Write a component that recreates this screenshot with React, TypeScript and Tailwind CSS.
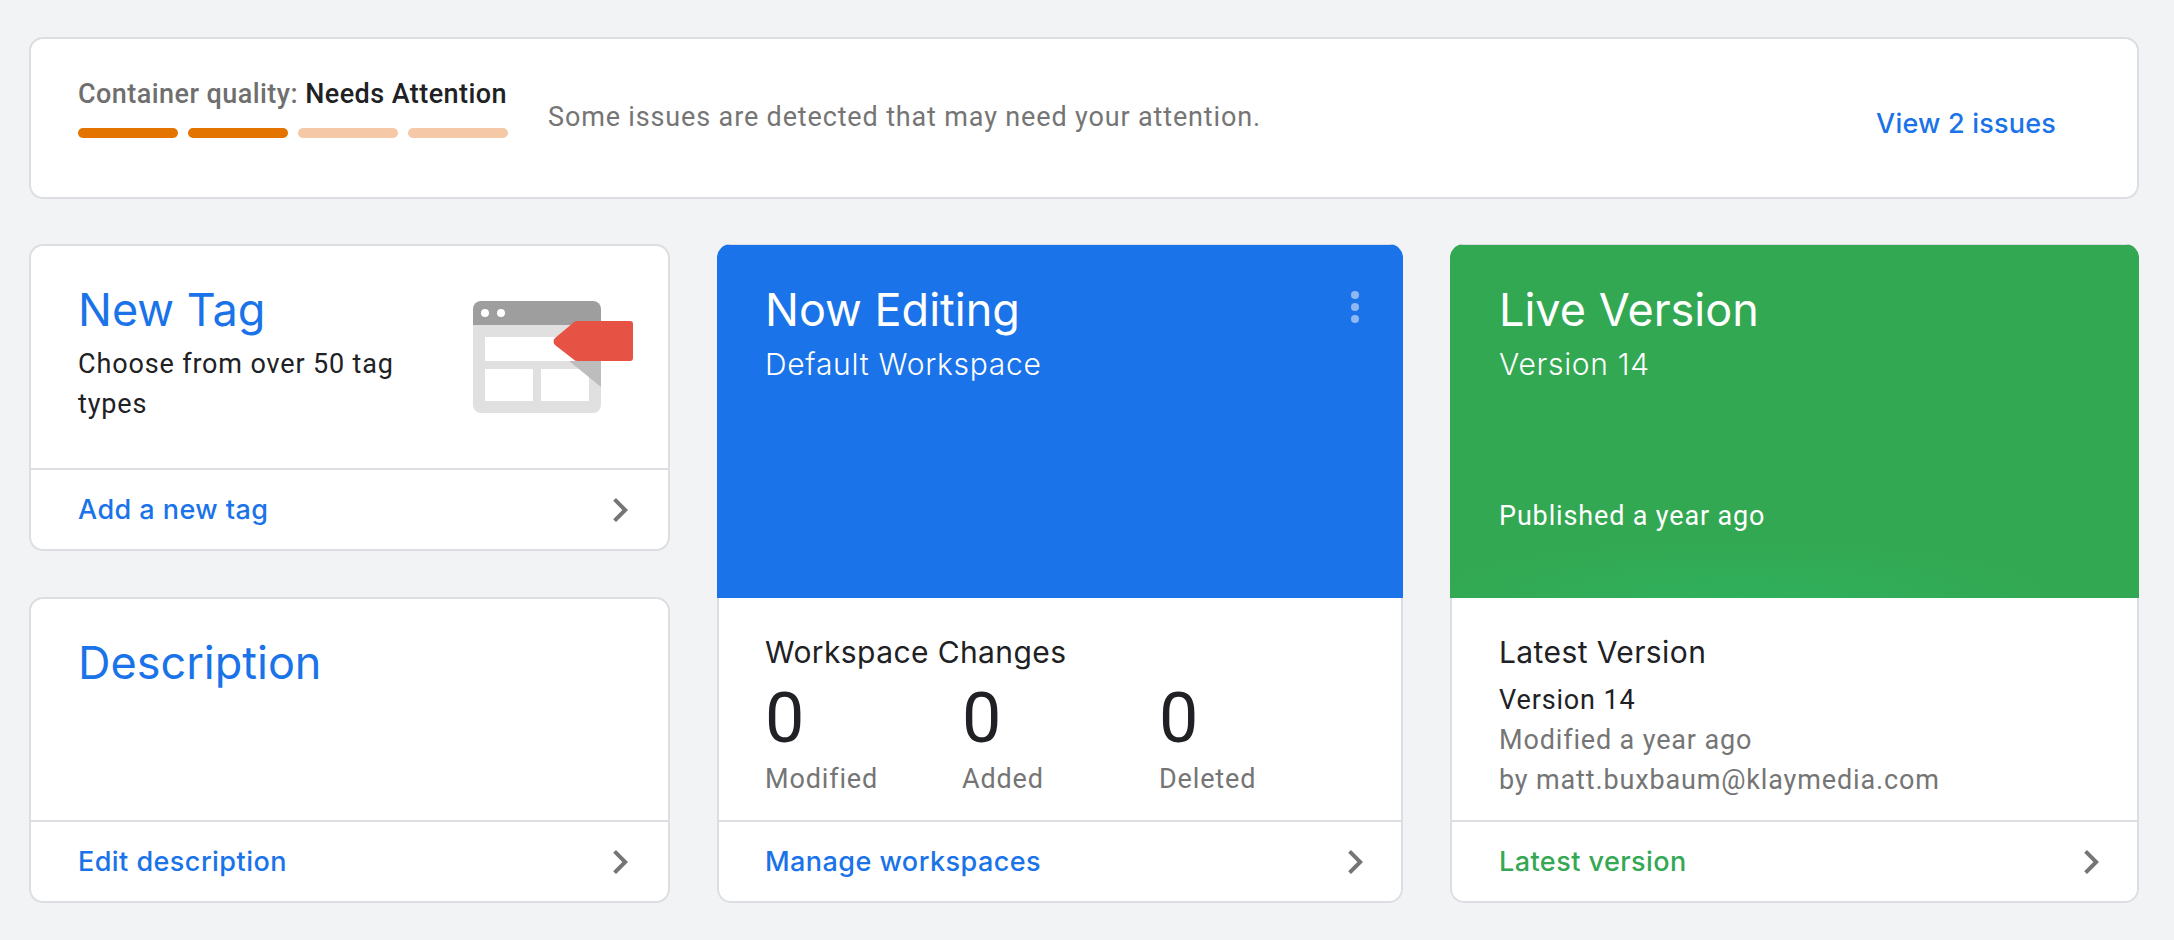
const roboto = "font-['Roboto',sans-serif]";
const display = "font-['Inter',sans-serif]";
const bodyText = "text-[27px] tracking-[0.85px]";
const titleText = "text-[45px] leading-[56px]";
const subText = "text-[30px] leading-[34px] tracking-[0.4px]";
const subTextLight = "text-[30px] leading-[34px] tracking-[0.7px] font-light";

function Chevron() {
  return (
    <svg viewBox="0 0 24 24" className="w-12 h-12 fill-[#757575] shrink-0">
      <path d="M10 6L8.59 7.41 13.17 12l-4.58 4.59L10 18l6-6z" />
    </svg>
  );
}

function CardFooter({ label, color, pad }: { label: string; color: string; pad: string }) {
  return (
    <div className={`h-[81px] shrink-0 border-t-2 border-[#dcdee1] flex items-center justify-between ${pad}`}>
      <span className={`${display} pt-[2px] text-[27px] font-medium tracking-[0.45px] ${color}`}>
        {label}
      </span>
      <Chevron />
    </div>
  );
}

function TagArt() {
  return (
    <svg viewBox="0 0 160 112" className="w-[160px] h-[112px] shrink-0">
      <path d="M8 0H120a8 8 0 0 1 8 8V24H0V8a8 8 0 0 1 8-8z" fill="#9e9e9e" />
      <path d="M0 24H128V104a8 8 0 0 1-8 8H8a8 8 0 0 1-8-8z" fill="#e0e0e0" />
      <circle cx="12" cy="12" r="4" fill="#fff" />
      <circle cx="28" cy="12" r="4" fill="#fff" />
      <rect x="12" y="36" width="104" height="24" fill="#fff" />
      <rect x="12" y="68" width="48" height="32" fill="#fff" />
      <rect x="68" y="68" width="48" height="32" fill="#fff" />
      <path d="M96 60H128V86z" fill="#bdbdbd" />
      <path
        d="M104 20H157a3 3 0 0 1 3 3V57a3 3 0 0 1-3 3H104a5 5 0 0 1-4-2L82 44a5 5 0 0 1 0-7L100 22a5 5 0 0 1 4-2z"
        fill="#e65345"
      />
    </svg>
  );
}

export default function App() {
  return (
    <div className={`${roboto} min-h-screen bg-[#f1f3f4] pl-[29px] pr-[35px] pt-[37px] pb-[37px]`}>
      {/* Quality banner */}
      <div className="h-[162px] bg-white border-2 border-[#dcdee1] rounded-[14px] flex pl-[47px] pr-[81px]">
        <div className="w-[470px] shrink-0 pt-[39px]">
          <div className="text-[27px] tracking-[0.44px] leading-[32px] font-medium whitespace-nowrap">
            <span className="text-[#6f6f6f]">Container quality: </span>
            <span className="text-[#202124]">Needs Attention</span>
          </div>
          <div className="mt-[18px] flex gap-[10px]">
            <div className="w-[100px] h-[10px] rounded-full bg-[#e37400]" />
            <div className="w-[100px] h-[10px] rounded-full bg-[#e37400]" />
            <div className="w-[100px] h-[10px] rounded-full bg-[#f5c9a8]" />
            <div className="w-[100px] h-[10px] rounded-full bg-[#f5c9a8]" />
          </div>
        </div>
        <div className={`flex-1 pt-[62px] ${bodyText} leading-[32px] text-[#757575] whitespace-nowrap`}>
          Some issues are detected that may need your attention.
        </div>
        <div className={`${display} pt-[69px] text-[27px] tracking-[0.2px] leading-[32px] font-medium text-[#1a73e8] whitespace-nowrap`}>
          View 2 issues
        </div>
      </div>

      <div className="mt-[45px] grid grid-cols-[641px_686px_689px] gap-x-[47px]">
        {/* Left column */}
        <div className="flex flex-col gap-[46px]">
          <div className="h-[307px] bg-white border-2 border-[#dcdee1] rounded-[14px] overflow-hidden flex flex-col">
            <div className="flex-1 flex justify-between pl-[47px] pr-[35px]">
              <div className="w-[360px] pt-[36px]">
                <div className={`${display} ${titleText} text-[#1a73e8]`}>New Tag</div>
                <div className={`mt-[6px] ${bodyText} leading-[40px] text-[#202124]`}>
                  Choose from over 50 tag types
                </div>
              </div>
              <div className="pt-[55px]">
                <TagArt />
              </div>
            </div>
            <CardFooter label="Add a new tag" color="text-[#1a73e8]" pad="pl-[47px] pr-[24px]" />
          </div>

          <div className="h-[306px] bg-white border-2 border-[#dcdee1] rounded-[14px] overflow-hidden flex flex-col">
            <div className="flex-1 pl-[47px] pt-[36px]">
              <div className={`${display} ${titleText} text-[#1a73e8]`}>Description</div>
            </div>
            <CardFooter label="Edit description" color="text-[#1a73e8]" pad="pl-[47px] pr-[24px]" />
          </div>
        </div>

        {/* Now editing */}
        <div className="h-[659px] rounded-[14px] overflow-hidden flex flex-col">
          <div className="h-[354px] shrink-0 border-t border-[#dcdee1] bg-[#1a73e8] text-white flex justify-between pl-[48px] pr-[44px] pt-[37px]">
            <div>
              <div className={`${display} ${titleText}`}>Now Editing</div>
              <div className={`${display} mt-[9px] ${subTextLight}`}>Default Workspace</div>
            </div>
            <div className="pt-[9px] flex flex-col gap-[4px]">
              <div className="w-2 h-2 rounded-full bg-[#8fb8f3]" />
              <div className="w-2 h-2 rounded-full bg-[#8fb8f3]" />
              <div className="w-2 h-2 rounded-full bg-[#8fb8f3]" />
            </div>
          </div>
          <div className="flex-1 bg-white border-x-2 border-b-2 border-[#dcdee1] rounded-b-[14px] flex flex-col">
            <div className="flex-1 pl-[46px] pt-[37px]">
              <div className={`${display} ${subText} text-[#202124]`}>Workspace Changes</div>
              <div className="mt-[16px] flex">
                {["Modified", "Added", "Deleted"].map((s) => (
                  <div key={s} className="w-[197px]">
                    <div className="text-[70px] leading-[66px] text-[#202124]">0</div>
                    <div className={`mt-[12px] ${bodyText} leading-[32px] text-[#757575]`}>{s}</div>
                  </div>
                ))}
              </div>
            </div>
            <CardFooter label="Manage workspaces" color="text-[#1a73e8]" pad="pl-[46px] pr-[22px]" />
          </div>
        </div>

        {/* Live version */}
        <div className="h-[659px] rounded-[14px] overflow-hidden flex flex-col">
          <div className="relative h-[354px] shrink-0 border-t border-[#dcdee1] bg-[#33a852] text-white flex flex-col pl-[49px] pt-[37px]">
            <div className="absolute inset-x-0 bottom-0 h-[70px] bg-[radial-gradient(ellipse_330px_60px_at_42%_100%,#30b05c,transparent)]" />
            <div className={`${display} ${titleText}`}>Live Version</div>
            <div className={`${display} mt-[9px] ${subTextLight}`}>Version 14</div>
            <div className={`relative mt-[119px] ${bodyText} leading-[32px]`}>Published a year ago</div>
          </div>
          <div className="flex-1 bg-white border-x-2 border-b-2 border-[#dcdee1] rounded-b-[14px] flex flex-col">
            <div className="flex-1 pl-[47px] pt-[37px]">
              <div className={`${display} ${subText} text-[#202124]`}>Latest Version</div>
              <div className={`mt-[11px] ${bodyText} leading-[40px] text-[#202124]`}>Version 14</div>
              <div className={`${bodyText} leading-[40px] text-[#757575]`}>Modified a year ago</div>
              <div className={`${bodyText} leading-[40px] text-[#757575]`}>by matt.buxbaum@klaymedia.com</div>
            </div>
            <CardFooter label="Latest version" color="text-[#34a853]" pad="pl-[47px] pr-[22px]" />
          </div>
        </div>
      </div>
    </div>
  );
}
